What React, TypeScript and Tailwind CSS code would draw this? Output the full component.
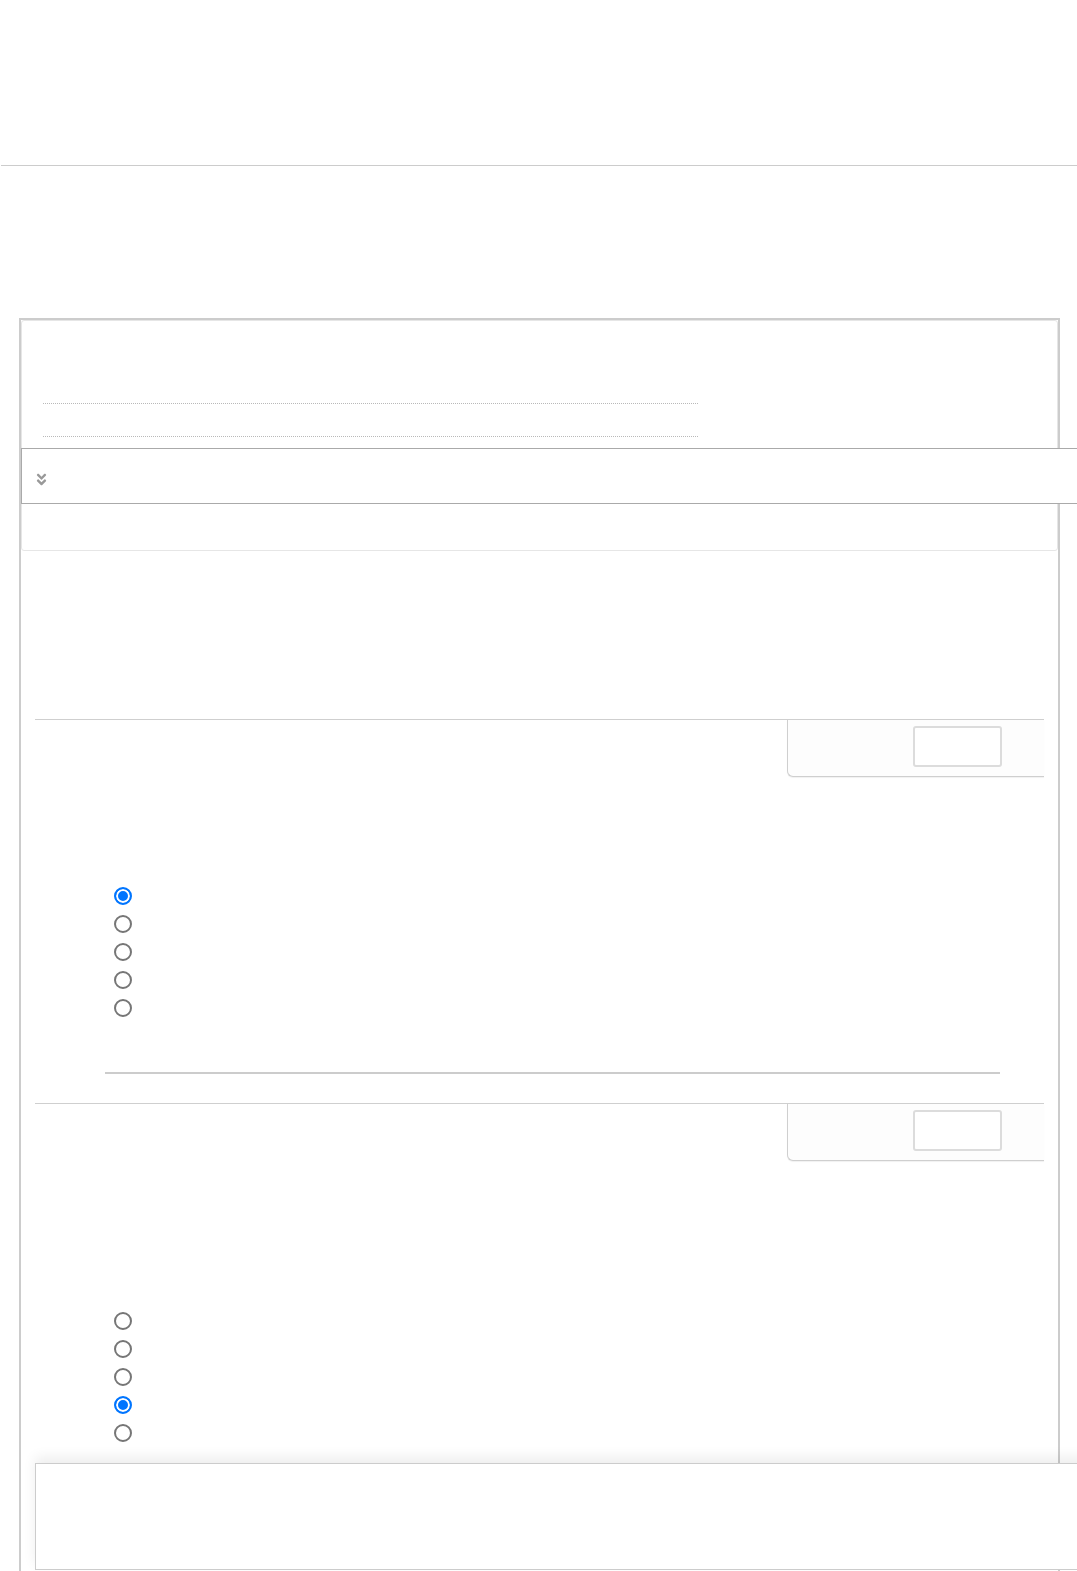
import React from 'react';
import { FaAngleDoubleDown } from 'react-icons/fa';

const Question: React.FC<{ name: string; checked: number; gapTop: string; tail?: boolean }> = ({
  name,
  checked,
  gapTop,
  tail,
}) => (
  <div className="mx-[14px] border-t border-[#cfcfcf]">
    <div className="flex justify-end">
      <div className="w-[257px] h-[57px] border-l border-b border-[#cfcfcf] rounded-bl-md bg-[#fdfdfd] pl-[125px] pt-[6px] shadow-[0_1px_1px_rgba(0,0,0,0.06)]">
        <div className="w-[89px] h-[41px] border-2 border-[#dcdcdc] rounded-[3px] bg-white" />
      </div>
    </div>
    <div className={`${gapTop} pl-[79px] flex flex-col gap-[10px]`}>
      {[0, 1, 2, 3, 4].map((i) => (
        <label key={i} className="flex items-center h-[18px]">
          <input
            type="radio"
            name={name}
            defaultChecked={i === checked}
            className="m-0 w-[18px] h-[18px] appearance-none rounded-full border-2 border-[#767676] bg-white checked:border-[#0075ff] checked:bg-[#0075ff] checked:shadow-[inset_0_0_0_2px_white]"
          />
        </label>
      ))}
    </div>
    {tail && <div className="ml-[70px] mt-[55px] w-[895px] border-t-2 border-[#cccccc] mb-[29px]" />}
  </div>
);

export default function App() {
  return (
    <div className="relative h-[1571px] overflow-hidden bg-white font-['Liberation_Sans',Arial,sans-serif]">
      <header className="h-[166px] border-b border-[#cccccc] ml-[1px]" />

      <div className="mt-[152px] ml-[19px] w-[1041px] border-2 border-[#cccccc] border-b-0 pb-[60px]">
        {/* top card */}
        <div className="border border-[#e6e6e6] rounded-[3px] pt-[82px] px-[21px] pb-[46px]">
          <div className="w-[655px] border-t border-dotted border-[#b9b9b9]" />
          <div className="mt-[32px] w-[655px] border-t border-dotted border-[#b9b9b9]" />
          <div className="mt-[11px] -ml-[22px] w-[1080px] h-[56px] border border-[#aaaaaa] bg-white flex items-center pl-[13px] pt-[6px]">
            <FaAngleDoubleDown className="w-[13px] h-[15px] text-[#999999]" />
          </div>
        </div>

        <div className="mt-[168px]">
          <Question name="q1" checked={0} gapTop="mt-[110px]" tail />
          <Question name="q2" checked={3} gapTop="mt-[151px]" />
        </div>

        <div className="mt-[21px] ml-[14px] w-[1100px] h-[107px] border border-[#cccccc] bg-white shadow-[0_-6px_12px_rgba(0,0,0,0.07)]" />
      </div>
    </div>
  );
}
